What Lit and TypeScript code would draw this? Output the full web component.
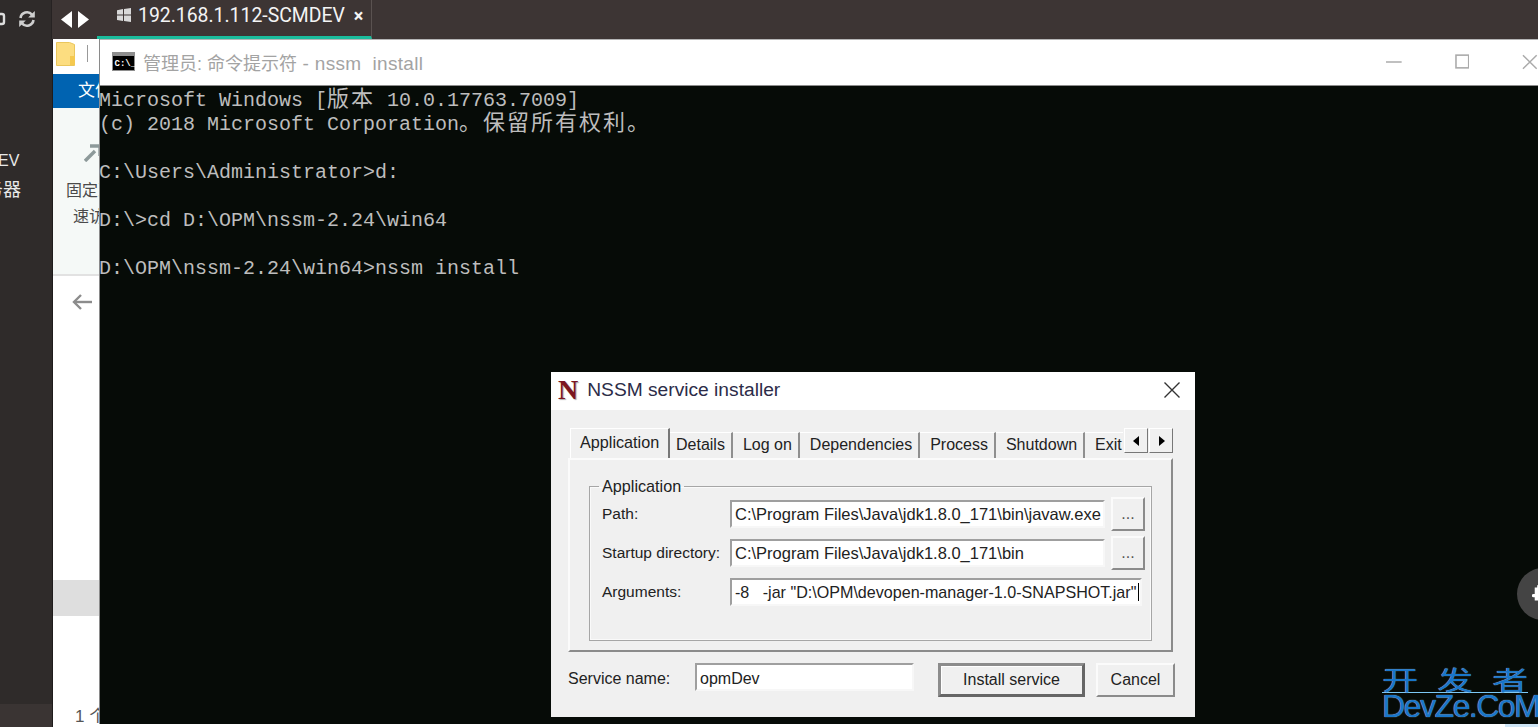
import { LitElement, html, css } from "lit";
import { customElement } from "lit/decorators.js";

const CONSOLE: unknown[] = [
  html`Microsoft Windows [<span class="cjk">版本</span> 10.0.17763.7009]`,
  html`(c) 2018 Microsoft Corporation<span class="cjk">。保留所有权利。</span>`,
  "",
  "C:\\Users\\Administrator>d:",
  "",
  "D:\\>cd D:\\OPM\\nssm-2.24\\win64",
  "",
  "D:\\OPM\\nssm-2.24\\win64>nssm install",
];

const TABS = ["Details", "Log on", "Dependencies", "Process", "Shutdown", "Exit"];

@customElement("app-root")
export class AppRoot extends LitElement {
  static styles = css`
    :host { display: block; width: 1538px; height: 727px; overflow: hidden; position: relative; background: #2f2b2a; font-family: "Liberation Sans", "Noto Sans CJK SC", sans-serif; }
    .topbar { height: 39px; display: flex; background: #3d3534; color: #fff; }
    .top-left { width: 52px; background: #2f2b2a; border-right: 1px solid #262222; display: flex; align-items: center; gap: 12px; overflow: hidden; padding-bottom: 2px; box-sizing: border-box; }
    .top-left .d { width: 6px; height: 14px; }
    .nav { width: 36px; display: flex; align-items: center; gap: 6px; padding: 0 0 1px 9px; box-sizing: content-box; }
    .tab { width: 275px; box-sizing: border-box; border-bottom: 3px solid #1abc9c; border-right: 1px solid #5a5250; display: flex; align-items: center; padding: 0 0 6px 20px; font: 19.4px Roboto, sans-serif; color: #f4f4f4; }
    .tab svg { margin-right: 7px; }
    .tab .x { margin-left: 9px; font-size: 18px; font-weight: 700; }

    .main { display: flex; height: 688px; }
    .side { width: 52px; flex: none; border-right: 1px solid #1f1c1c; background: #2f2b2a; color: #e8e8e8; display: flex; flex-direction: column; overflow: hidden; font-size: 16px; }
    .side .ev { margin-top: 113px; height: 18px; line-height: 18px; margin-left: -2px; }
    .side .qi { margin-top: 11px; line-height: 18px; margin-left: -15px; white-space: nowrap; font-size: 18px; }
    .side .foot { margin-top: auto; height: 23px; background: #3a3433; }

    .explorer { flex: 1; background: #fff; display: flex; flex-direction: column; font-size: 16px; overflow: hidden; }
    .explorer > * { flex: none; }
    .ex-title { height: 35px; display: flex; align-items: center; padding-left: 3px; gap: 11px; box-sizing: border-box; padding-bottom: 6px; }
    .ex-title i { width: 1px; height: 17px; background: #999; }
    .ex-blue { height: 34px; background: #0063b1; color: #fff; padding-left: 25px; line-height: 34px; font-size: 17px; }
    .ribbon { height: 168px; box-sizing: border-box; background: #f5f9f7; border-bottom: 2px solid #e2e2e2; color: #4a4a4a; }
    .ribbon svg { display: block; margin: 36px 0 0 31px; }
    .ribbon .a { margin: 19px 0 0 13px; line-height: 20px; white-space: nowrap; }
    .ribbon .b { margin: 6px 0 0 20px; line-height: 20px; white-space: nowrap; }
    .back { height: 52px; padding: 18px 0 0 19px; box-sizing: border-box; }
    .gap { height: 252px; }
    .sel { height: 36px; background: #dedede; width: 46px; }
    .count { margin-top: 91px; padding-left: 22px; font-size: 17px; color: #555; line-height: 20px; white-space: nowrap; display: flex; }
    .count i { margin-left: auto; width: 33px; height: 3px; margin-top: 17px; background: #cfe6f6; }

    .cmd { position: absolute; left: 99px; top: 39px; width: 1439px; height: 685px; background: #060b07; border-left: 1px solid #8a8a8a; box-sizing: border-box; display: flex; flex-direction: column; }
    .cmd-title { height: 47px; flex: none; background: #fff; border-top: 1px solid #b5b5b5; border-bottom: 1px solid #8c8c8c; box-sizing: border-box; display: flex; align-items: center; padding: 0 0 2px 12px; color: #a3a3a3; font-size: 18px; }
    .cmd-title .ttl { margin-left: 8px; white-space: pre; }
    .cmd-title .lat { font-size: 19px; letter-spacing: 0.3px; }
    .caps { margin-left: auto; display: flex; align-items: center; gap: 53px; width: 152px; flex: none; }
    .console { margin: 0 0 0 -1px; padding: 3px 0 0 0; font: 20px/24px "Liberation Mono", "Noto Sans CJK SC", monospace; color: #bdbdbd; white-space: pre; }
    .console .cjk { font-size: 22px; line-height: 0; letter-spacing: 2px; font-family: "Noto Sans CJK SC", sans-serif; }
    .console div { height: 24px; }

    .dialog { position: absolute; left: 551px; top: 372px; width: 644px; height: 345px; background: #f0f0f0; color: #222; font-size: 16px; box-sizing: border-box; }
    .d-title { height: 38px; background: #fff; display: flex; align-items: center; padding: 0 14px 3px 7px; box-sizing: border-box; color: #2c2c48; font-size: 19.2px; }
    .d-title .n { font: 700 28px/30px "Liberation Serif", serif; color: #7d1620; text-shadow: 1px 1px 1px #aaa; margin-right: 9px; }
    .d-title svg { margin-left: auto; }
    .d-body { padding: 18px 22px 0 17px; }
    .tabs { display: flex; align-items: flex-end; height: 30px; margin-left: 2px; width: 553px; overflow: hidden; font-size: 16px; }
    .t { height: 26px; line-height: 23px; box-sizing: border-box; padding: 0 6px 0 10px; border-right: 2px solid #8f8f8f; border-top: 1px solid #fff; white-space: nowrap; flex: none; }
    .t.first { padding-left: 6px; }
    .t.last { border-right: none; }
    .t.on { height: 30px; line-height: 26px; padding: 0 9px; border-top: 1px solid #fff; border-left: 1px solid #fff; border-right: 2px solid #777; width: 100px; font-size: 16.2px; }
    .tabs-wrap { position: relative; }
    .arrows { position: absolute; right: 0; top: 0; display: flex; gap: 1px; }
    .arrows span { width: 24px; height: 25px; box-sizing: border-box; background: #f0f0f0; border: 1px solid; border-color: #fff #777 #777 #fff; display: flex; align-items: center; justify-content: center; }
    .panel { height: 194px; box-sizing: border-box; border: 2px solid; border-color: #fbfbfb #8b8b8b #8b8b8b #fbfbfb; padding: 0 19px; }
    fieldset { margin: 17px 0 0; padding: 0 0 0 12px; border: 1px solid #a6a6a6; height: 164px; box-sizing: border-box; box-shadow: inset 0 0 0 1px #fafafa; min-width: 0; }
    legend { margin-left: -3px; padding: 0 3px; height: 18px; line-height: 18px; font-size: 16.2px; }
    .rows { display: grid; grid-template-columns: 122px 375px 34px; column-gap: 6px; grid-auto-rows: 39px; align-items: center; margin-top: -1px; }
    .lab { white-space: nowrap; font-size: 15.5px; }
    .inp { height: 28px; box-sizing: border-box; background: #fff; border: 2px solid; border-color: #9f9f9f #f7f7f7 #f7f7f7 #9f9f9f; line-height: 24px; padding-left: 3px; white-space: nowrap; overflow: hidden; color: #222; font-size: 16.5px; }
    .inp.wide { grid-column: 2 / span 2; width: 412px; font-size: 16.1px; }
    .caret { display: inline-block; width: 1px; height: 18px; background: #000; vertical-align: -3px; margin-left: 2px; }
    .btn { box-sizing: border-box; display: flex; align-items: center; justify-content: center; background: #f0f0f0; border: 2px solid; border-color: #fbfbfb #8b8b8b #8b8b8b #fbfbfb; }
    .browse { height: 34px; color: #555; }
    .foot { display: flex; align-items: flex-start; margin: 11px -2px 0 0; }
    .foot .lab { width: 127px; flex: none; line-height: 32px; font-size: 16px; }
    .foot .inp { width: 219px; flex: none; line-height: 28px; font-size: 16px; }
    .install { width: 147px; height: 34px; flex: none; margin-left: 24px; border: 3px solid; border-color: #8c8c8c #666 #666 #8c8c8c; box-shadow: inset 1px 1px 0 #fff; }
    .cancel { width: 79px; height: 34px; margin-left: 11px; flex: none; }

    .puzzle { position: absolute; left: 1517px; top: 568px; width: 52px; height: 52px; border-radius: 50%; background: #444; }
    .puzzle svg { position: absolute; left: 15px; top: 17px; }
    .mark { position: absolute; left: 1382px; top: 660px; width: 146px; color: #1976c9; text-shadow: 0 0 1px #bfe3ff; }
    .mark .zh { display: flex; justify-content: space-between; height: 32px; font: 36px/32px "Noto Sans CJK SC", sans-serif; border-bottom: 1px solid #7cc8f5; }
    .mark .zh span { display: block; transform: translateY(2px) scaleY(0.72); }
    .mark .en { font: 32px/26px "Liberation Sans", sans-serif; white-space: nowrap; letter-spacing: -1.5px; }
  `;

  render() {
    return html`
      <div class="topbar">
        <div class="top-left">
          <svg class="d" viewBox="0 0 6 14"><path d="M-6 2h8q2 0 2 2v6q0 2-2 2h-8" fill="none" stroke="#ddd" stroke-width="2.4"/></svg>
          <svg width="18" height="18" viewBox="0 0 18 18" fill="none" stroke="#cfcfcf" stroke-width="2.6">
            <path d="M2.5 8A6.6 6.6 0 0 1 14 4.6"/><path d="M15.5 10A6.6 6.6 0 0 1 4 13.4"/>
            <path d="M16.8 1v6.6h-6.6z" fill="#cfcfcf" stroke="none"/><path d="M1.2 17v-6.6h6.6z" fill="#cfcfcf" stroke="none"/>
          </svg>
        </div>
        <div class="nav">
          <svg width="11" height="17" viewBox="0 0 11 18" preserveAspectRatio="none"><path d="M11 0v18L0 9z" fill="#fff"/></svg>
          <svg width="11" height="17" viewBox="0 0 11 18" preserveAspectRatio="none"><path d="M0 0v18l11-9z" fill="#fff"/></svg>
        </div>
        <div class="tab">
          <svg width="14" height="14" viewBox="0 0 14 14" fill="#d8d8d8"><path d="M0 2.2 6 1v5.4H0zM7 .9 14 0v6.4H7zM0 7.4h6v5.6l-6-1zM7 7.4h7V14l-7-.9z"/></svg>
          <span>192.168.1.112-SCMDEV</span><span class="x">×</span>
        </div>
      </div>
      <div class="main">
        <div class="side">
          <div class="ev">EV</div>
          <div class="qi">务器</div>
          <div class="foot"></div>
        </div>
        <div class="explorer">
          <div class="ex-title">
            <svg width="20" height="24" viewBox="0 0 20 24"><path d="M.5.5h13l5 2v21H.5z" fill="#fcdd80" stroke="#eac65c"/><path d="M14 14h5v9h-5z" fill="#f5c94f"/></svg>
            <i></i>
          </div>
          <div class="ex-blue">文件</div>
          <div class="ribbon">
            <svg width="18" height="18" viewBox="0 0 18 18" fill="none" stroke="#8d9a9a" stroke-width="3.4"><path d="M1 17 11 7"/><path d="M6 2h10v10" /></svg>
            <div class="a">固定到</div>
            <div class="b">速访问</div>
          </div>
          <div class="back">
            <svg width="20" height="16" viewBox="0 0 20 16" fill="none" stroke="#8c8c8c" stroke-width="2.4"><path d="M20 8H2"/><path d="M9 1 2 8l7 7"/></svg>
          </div>
          <div class="gap"></div>
          <div class="sel"></div>
          <div class="count"><span>1 个项目</span><i></i></div>
        </div>
      </div>

      <div class="cmd">
        <div class="cmd-title">
          <svg width="23" height="19" viewBox="0 0 23 19"><rect width="23" height="19" fill="#8e8e8e"/><rect x="1" y="4" width="21" height="14" fill="#000"/><text x="2.500" y="14" font-size="9" font-weight="700" fill="#fff" font-family="Liberation Mono">C:\\_</text></svg>
          <span class="ttl">管理员: 命令提示符<span class="lat"> - nssm  install</span></span>
          <div class="caps">
            <svg width="16" height="2" viewBox="0 0 16 2"><path d="M0 1h16" stroke="#aaa" stroke-width="1.500"/></svg>
            <svg width="15" height="15" viewBox="0 0 15 15"><rect x="1" y="1" width="13" height="13" fill="none" stroke="#aaa" stroke-width="1.600"/></svg>
            <svg width="16" height="16" viewBox="0 0 16 16"><path d="M1 1l14 14M15 1 1 15" stroke="#aaa" stroke-width="1.500"/></svg>
          </div>
        </div>
        <div class="console">${CONSOLE.map((l) => html`<div>${l}</div>`)}</div>
      </div>

      <div class="dialog">
        <div class="d-title">
          <span class="n">N</span><span>NSSM service installer</span>
          <svg width="18" height="18" viewBox="0 0 18 18"><path d="M1.500 1.500l15 15M16.500 1.500l-15 15" stroke="#333" stroke-width="1.400"/></svg>
        </div>
        <div class="d-body">
          <div class="tabs-wrap">
            <div class="tabs">
              <div class="t on">Application</div>
              ${TABS.map((t, i) => html`<div class="t ${i === 0 ? "first" : ""} ${i === TABS.length - 1 ? "last" : ""}">${t}</div>`)}
            </div>
            <div class="arrows">
              <span><svg width="7" height="10" viewBox="0 0 7 10"><path d="M6 0v10L0 5z"/></svg></span>
              <span><svg width="7" height="10" viewBox="0 0 7 10"><path d="M1 0v10l6-5z"/></svg></span>
            </div>
          </div>
          <div class="panel">
            <fieldset>
              <legend>Application</legend>
              <div class="rows">
                <span class="lab">Path:</span>
                <div class="inp">C:\\Program Files\\Java\\jdk1.8.0_171\\bin\\javaw.exe</div>
                <div class="btn browse">...</div>
                <span class="lab">Startup directory:</span>
                <div class="inp">C:\\Program Files\\Java\\jdk1.8.0_171\\bin</div>
                <div class="btn browse">...</div>
                <span class="lab">Arguments:</span>
                <div class="inp wide">-8&nbsp;&nbsp; -jar "D:\\OPM\\devopen-manager-1.0-SNAPSHOT.jar"<span class="caret"></span></div>
              </div>
            </fieldset>
          </div>
          <div class="foot">
            <span class="lab">Service name:</span>
            <div class="inp">opmDev</div>
            <div class="btn install">Install service</div>
            <div class="btn cancel">Cancel</div>
          </div>
        </div>
      </div>

      <div class="puzzle">
        <svg width="12" height="18" viewBox="0 0 14 22" fill="#fff"><path d="M3 3h3V1.500a2 2 0 0 1 4 0V3h4v16H3v-4H1.500a2 2 0 0 1 0-4H3V8z"/></svg>
      </div>
      <div class="mark">
        <div class="zh"><span>开</span><span>发</span><span>者</span></div>
        <div class="en">DevZe.CoM</div>
      </div>
    `;
  }
}
